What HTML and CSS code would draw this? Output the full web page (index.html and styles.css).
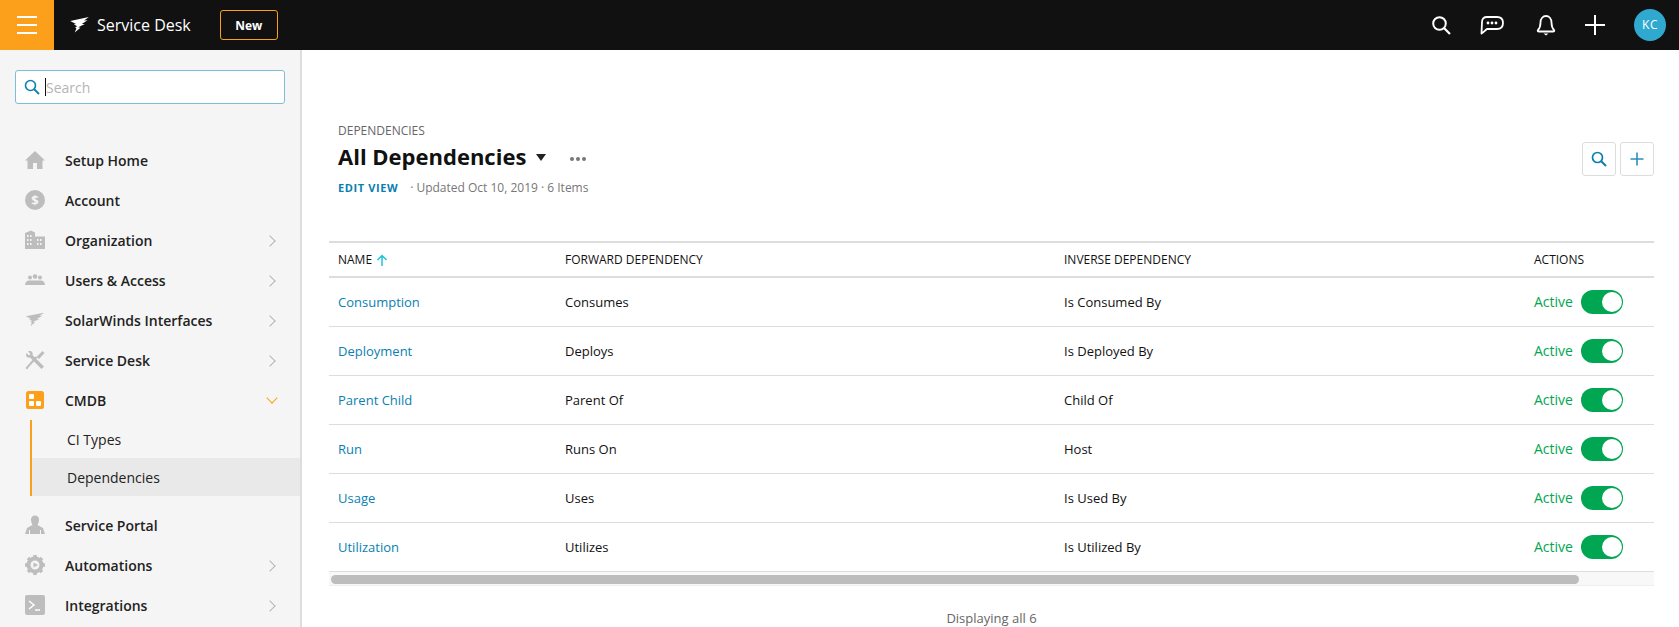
FILE: index.html
```html
<!DOCTYPE html>
<html lang="en">
<head>
<meta charset="utf-8">
<title>All Dependencies - Service Desk</title>
<link rel="stylesheet" href="styles.css">
</head>
<body>
<header class="topbar">
  <button class="burger"><span></span><span></span><span></span></button>
  <div class="brand">
    <svg class="brand-logo" viewBox="0 0 22 18"><path d="M0 4.5 L21 0 L15.5 4 L19.5 3.6 L13 8 L16.500 7.800 L9 11.500 L11.500 12 L5 17.500 L7 12.800 L5.500 11.500 L8 10.500 L4 8.500 L6.500 8 Z" fill="#fff"/></svg>
    <span class="brand-name">Service Desk</span>
  </div>
  <button class="new-btn">New</button>
  <div class="top-actions">
    <svg class="top-icon" viewBox="0 0 20 20"><circle cx="8.500" cy="8.500" r="6.300" fill="none" stroke="#fff" stroke-width="2"/><path d="M13 13 L19 19" stroke="#fff" stroke-width="2.200"/></svg>
    <svg class="top-icon chat" viewBox="0 0 24 20"><path d="M1.500 18.500 L2 7 C2 3.500 4 2 7 2 H17 C20.500 2 23 4 23 8 C23 12 20.500 14 17 14 H7 C5 15.500 3.500 17.500 1.500 18.500 Z" fill="none" stroke="#fff" stroke-width="1.800" stroke-linejoin="round"/><circle cx="8" cy="8" r="1.400" fill="#fff"/><circle cx="12" cy="8" r="1.400" fill="#fff"/><circle cx="16" cy="8" r="1.400" fill="#fff"/></svg>
    <svg class="top-icon bell" viewBox="0 0 20 22"><path d="M2 16 C4 14 4.500 12 4.500 8.500 C4.500 4.500 7 2 10 2 C13 2 15.500 4.500 15.500 8.500 C15.500 12 16 14 18 16 C18.800 17 18 17.500 17 17.500 H3 C2 17.500 1.200 17 2 16 Z" fill="none" stroke="#fff" stroke-width="1.800"/><path d="M7.500 19.500 H12.500 L10 21.500 Z" fill="#fff"/></svg>
    <svg class="top-icon plus" viewBox="0 0 20 20"><path d="M10 0 V20 M0 10 H20" stroke="#fff" stroke-width="2"/></svg>
    <div class="avatar">KC</div>
  </div>
</header>
<div class="shell">
  <aside class="sidebar">
    <div class="search">
      <svg class="search-icon" viewBox="0 0 16 16"><circle cx="6.500" cy="6.500" r="5" fill="none" stroke="#0a7fb0" stroke-width="1.600"/><path d="M10 10 L15 15" stroke="#0a7fb0" stroke-width="1.800"/></svg>
      <span class="caret"></span>
      <input class="search-input" type="text" placeholder="Search">
    </div>
    <nav class="nav">
      <a class="nav-item"><svg class="nav-icon" viewBox="0 0 20 20"><path d="M10 1 L20 10.500 H17.500 V19 H12 V13 H8 V19 H2.500 V10.500 H0 Z" fill="#bdbdbd"/></svg><span>Setup Home</span></a>
      <a class="nav-item"><svg class="nav-icon" viewBox="0 0 20 20"><circle cx="10" cy="10" r="10" fill="#bdbdbd"/><text x="10" y="14.500" class="dollar">$</text></svg><span>Account</span></a>
      <a class="nav-item more"><svg class="nav-icon" viewBox="0 0 20 20"><path d="M0 3 L6 0.500 L10 2.500 V6.500 H20 V19 H0 Z" fill="#bdbdbd"/><path d="M2 5 H3.500 V7 H2 Z M5 5 H6.500 V7 H5 Z M2 9 H3.500 V11 H2 Z M5 9 H6.500 V11 H5 Z M2 13 H3.500 V15 H2 Z M5 13 H6.500 V15 H5 Z M12 9 H13.500 V11 H12 Z M15 9 H16.500 V11 H15 Z M12 13 H13.500 V15 H12 Z M15 13 H16.500 V15 H15 Z" fill="#f5f5f5"/></svg><span>Organization</span></a>
      <a class="nav-item more"><svg class="nav-icon" viewBox="0 0 20 20"><circle cx="5" cy="7.500" r="2" fill="#bdbdbd"/><circle cx="10" cy="6.500" r="2.300" fill="#bdbdbd"/><circle cx="15" cy="7.500" r="2" fill="#bdbdbd"/><path d="M0 15 C0 12 2 10.500 4 10.500 H16 C18 10.500 20 12 20 15 Z" fill="#bdbdbd"/></svg><span>Users &amp; Access</span></a>
      <a class="nav-item more"><svg class="nav-icon" viewBox="0 0 22 18"><path d="M1 5 L21 1 L16 4.500 L19 4.300 L13 8 L16 7.800 L9 11 L11 11.500 L6 16 L7.500 12 L6 11 L8 10 L4.500 8.500 L6.500 8 Z" fill="#bdbdbd"/></svg><span>SolarWinds Interfaces</span></a>
      <a class="nav-item more"><svg class="nav-icon" viewBox="0 0 20 20"><path d="M1.500 3 L4 5.500 L5.500 4 L3 1.500 C6 0 8.500 2.500 7.500 5 L19 16.500 L16.500 19 L5 7.500 C2.500 8.500 0 6 1.500 3 Z" fill="#bdbdbd"/><path d="M17.500 1 L19.500 3 L14 9 L12.500 7.500 L3.500 17.500 L2 19.500 L0.500 18 L10.500 6.500 L11.500 7 Z" fill="#bdbdbd"/></svg><span>Service Desk</span></a>
      <a class="nav-item open"><svg class="nav-icon" viewBox="0 0 20 20"><rect x="1" y="1" width="18" height="18" rx="2.500" fill="#fca01c"/><rect x="4" y="4" width="5" height="5" rx="1" fill="#fff"/><rect x="4" y="11" width="5" height="5" rx="1" fill="#fff"/><rect x="11" y="11" width="5" height="5" rx="1" fill="#fff"/></svg><span>CMDB</span></a>
      <div class="subnav">
        <a class="sub-item">CI Types</a>
        <a class="sub-item current">Dependencies</a>
      </div>
      <a class="nav-item"><svg class="nav-icon" viewBox="0 0 20 20"><path d="M6 4.500 C6 2 8 0.500 10 0.500 C12 0.500 14 2 14 4.500 C14 7 13 9 12.500 10 L18 13 L20 19 H0 L2 13 L7.500 10 C7 9 6 7 6 4.500 Z" fill="#bdbdbd"/><path d="M4.500 15 V19 M15.500 15 V19" stroke="#f5f5f5" stroke-width="1"/></svg><span>Service Portal</span></a>
      <a class="nav-item more"><svg class="nav-icon" viewBox="0 0 20 20"><circle cx="10" cy="10" r="6.500" fill="none" stroke="#bdbdbd" stroke-width="4"/><path d="M10 0 V3 M10 17 V20 M0 10 H3 M17 10 H20 M3 3 L5 5 M15 15 L17 17 M3 17 L5 15 M15 5 L17 3" stroke="#bdbdbd" stroke-width="3.500"/><path d="M8.500 7.500 L13 10 L8.500 12.500 Z" fill="#bdbdbd"/></svg><span>Automations</span></a>
      <a class="nav-item more"><svg class="nav-icon" viewBox="0 0 20 20"><rect width="20" height="20" rx="2" fill="#bdbdbd"/><path d="M4 6 L9 10 L4 14" fill="none" stroke="#fff" stroke-width="1.500"/><path d="M10 15 H15" stroke="#fff" stroke-width="1.500"/></svg><span>Integrations</span></a>
    </nav>
  </aside>
  <main class="main">
    <div class="page-head">
      <div class="head-left">
        <div class="crumb">DEPENDENCIES</div>
        <div class="title-row">
          <h1 class="title">All Dependencies</h1>
          <span class="tri"></span>
          <span class="dots"><i></i><i></i><i></i></span>
        </div>
        <div class="meta"><a class="edit">EDIT VIEW</a><span class="meta-text">· Updated Oct 10, 2019 · 6 Items</span></div>
      </div>
      <div class="head-btns">
        <button class="icon-btn"><svg viewBox="0 0 16 16"><circle cx="6.500" cy="6.500" r="5" fill="none" stroke="#0a7fb0" stroke-width="1.700"/><path d="M10 10 L15 15" stroke="#0a7fb0" stroke-width="1.900"/></svg></button>
        <button class="icon-btn"><svg viewBox="0 0 16 16"><path d="M8 1.500 V14.500 M1.500 8 H14.500" stroke="#2a8fbd" stroke-width="1.600"/></svg></button>
      </div>
    </div>
    <table class="grid">
      <colgroup><col class="c1"><col class="c2"><col class="c3"><col class="c4"></colgroup>
      <thead>
        <tr><th>NAME <svg class="sort" viewBox="0 0 12 12"><path d="M6 12 V1.500 M1.500 6 L6 1.500 L10.500 6" fill="none" stroke="#1fc4d8" stroke-width="1.500"/></svg></th><th>FORWARD DEPENDENCY</th><th>INVERSE DEPENDENCY</th><th>ACTIONS</th></tr>
      </thead>
      <tbody>
        <tr><td><a class="link">Consumption</a></td><td>Consumes</td><td>Is Consumed By</td><td><div class="act"><span class="active">Active</span><span class="toggle"><i></i></span></div></td></tr>
        <tr><td><a class="link">Deployment</a></td><td>Deploys</td><td>Is Deployed By</td><td><div class="act"><span class="active">Active</span><span class="toggle"><i></i></span></div></td></tr>
        <tr><td><a class="link">Parent Child</a></td><td>Parent Of</td><td>Child Of</td><td><div class="act"><span class="active">Active</span><span class="toggle"><i></i></span></div></td></tr>
        <tr><td><a class="link">Run</a></td><td>Runs On</td><td>Host</td><td><div class="act"><span class="active">Active</span><span class="toggle"><i></i></span></div></td></tr>
        <tr><td><a class="link">Usage</a></td><td>Uses</td><td>Is Used By</td><td><div class="act"><span class="active">Active</span><span class="toggle"><i></i></span></div></td></tr>
        <tr><td><a class="link">Utilization</a></td><td>Utilizes</td><td>Is Utilized By</td><td><div class="act"><span class="active">Active</span><span class="toggle"><i></i></span></div></td></tr>
      </tbody>
    </table>
    <div class="hscroll"><div class="thumb"></div></div>
    <div class="footer">Displaying all 6</div>
  </main>
</div>
</body>
</html>
```

FILE: styles.css
```css
* { box-sizing: border-box; }
html, body { margin: 0; height: 627px; overflow: hidden; }
body { font-family: "Open Sans", "Noto Sans", sans-serif; color: #111; background: #fff; }
button { font-family: inherit; padding: 0; }

.topbar { display: flex; align-items: center; height: 50px; background: #111; }
.burger { display: flex; flex-direction: column; justify-content: center; gap: 6px; align-items: center; width: 54px; height: 50px; background: #fca01c; border: 0; }
.burger span { display: block; width: 20px; height: 2px; background: #fff; }
.brand { display: flex; align-items: center; margin-left: 16px; gap: 7px; }
.brand-logo { width: 20px; height: 16px; }
.brand-name { color: #fff; font-size: 16px; line-height: 22px; }
.new-btn { width: 58px; height: 30px; margin-left: 29px; background: transparent; border: 1px solid #fca01c; border-radius: 3px; color: #fff; font-size: 12px; font-weight: 700; }
.top-actions { display: flex; align-items: center; margin-left: auto; margin-right: 13px; }
.top-icon { display: block; width: 20px; height: 20px; margin-right: 29px; }
.top-icon.chat { width: 24px; margin-right: 32px; }
.top-icon.bell { height: 22px; margin-right: 29px; }
.top-icon.plus { margin-right: 29px; }
.avatar { width: 32px; height: 32px; border-radius: 50%; background: #2fa9d0; color: #fff; font-size: 12px; line-height: 32px; text-align: center; letter-spacing: .5px; }

.shell { display: flex; height: 577px; }
.sidebar { flex: 0 0 302px; height: 577px; overflow: hidden; background: #f5f5f5; border-right: 2px solid #ddd; padding-top: 20px; }
.search { position: relative; display: flex; align-items: center; width: 270px; height: 34px; margin-left: 15px; background: #fff; border: 1px solid #7fbdd6; border-radius: 3px; padding-left: 8px; }
.search-icon { width: 16px; height: 16px; flex: none; }
.caret { width: 1px; height: 18px; background: #111; margin-left: 5px; flex: none; }
.search-input { flex: 1; min-width: 0; border: 0; outline: 0; background: transparent; padding: 0; font-family: inherit; font-size: 14px; }
.search-input::placeholder { color: #b5b5b5; opacity: 1; }

.nav { margin-top: 36px; }
.nav-item { display: flex; align-items: center; position: relative; height: 40px; padding-left: 25px; font-size: 14px; font-weight: 600; color: #222; }
.nav-icon { width: 20px; height: 20px; flex: none; margin-right: 20px; }
.dollar { fill: #f5f5f5; font-size: 13px; font-weight: 700; text-anchor: middle; font-family: "Open Sans", sans-serif; }
.more::after { content: ""; position: absolute; right: 26px; top: 17px; width: 7px; height: 7px; border-top: 1px solid #b5b5b5; border-right: 1px solid #b5b5b5; transform: rotate(45deg); }
.open::after { content: ""; position: absolute; right: 24px; top: 14px; width: 7px; height: 7px; border-bottom: 1px solid #fca01c; border-right: 1px solid #fca01c; transform: rotate(45deg); }
.subnav { margin: 0 0 9px 30px; border-left: 2px solid #fca01c; }
.sub-item { display: flex; align-items: center; height: 38px; padding-left: 35px; font-size: 14px; color: #222; }
.sub-item.current { background: #e9e9e9; padding-left: 35px; }

.main { flex: 1; min-width: 0; padding: 0 25px 0 27px; }
.page-head { display: flex; justify-content: space-between; align-items: flex-start; height: 191px; padding-top: 72px; }
.head-left { padding-left: 9px; }
.crumb { font-size: 12px; line-height: 18px; color: #666; }
.title-row { display: flex; align-items: center; height: 32px; }
.title { margin: 0; font-size: 22px; line-height: 32px; font-weight: 700; color: #111; }
.tri { width: 0; height: 0; margin: 3px 0 0 10px; border-left: 5px solid transparent; border-right: 5px solid transparent; border-top: 7px solid #222; }
.dots { display: flex; gap: 2px; margin: 5px 0 0 24px; }
.dots i { width: 4px; height: 4px; border-radius: 50%; background: #777; }
.meta { display: flex; align-items: center; height: 20px; margin-top: 5px; font-size: 12px; }
.edit { font-size: 11px; font-weight: 700; letter-spacing: .6px; color: #0a7fb0; }
.meta-text { color: #777; margin-left: 12px; }
.head-btns { display: flex; gap: 4px; padding-top: 20px; }
.icon-btn { display: flex; align-items: center; justify-content: center; width: 34px; height: 34px; background: #fff; border: 1px solid #ddd; border-radius: 3px; }
.icon-btn svg { width: 16px; height: 16px; }

.grid { width: 100%; table-layout: fixed; border-collapse: collapse; font-size: 13px; }
.c1 { width: 227px; }
.c2 { width: 499px; }
.c3 { width: 470px; }
.grid th { height: 35px; padding: 0 0 0 9px; text-align: left; font-size: 12px; font-weight: 400; color: #111; border-top: 2px solid #ddd; border-bottom: 2px solid #ddd; }
.grid td { height: 49px; padding: 0 0 0 9px; border-bottom: 1px solid #ddd; color: #111; }
.sort { width: 12px; height: 12px; vertical-align: -2px; margin-left: 1px; }
.link { color: #0a7fb0; }
.act { display: flex; align-items: center; gap: 8px; }
.active { color: #00a651; font-size: 14px; }
.toggle { display: flex; justify-content: flex-end; align-items: center; width: 42px; height: 24px; padding-right: 1px; border-radius: 12px; background: #00a651; }
.toggle i { width: 20px; height: 20px; border-radius: 50%; background: #fff; }

.hscroll { height: 14px; padding: 3px 2px 1px; background: #f8f8f8; border-bottom: 1px solid #eee; }
.thumb { width: 1248px; height: 9px; border-radius: 5px; background: #bdbdbd; }
.footer { margin-top: 22px; text-align: center; font-size: 13px; color: #666; line-height: 20px; }
```
